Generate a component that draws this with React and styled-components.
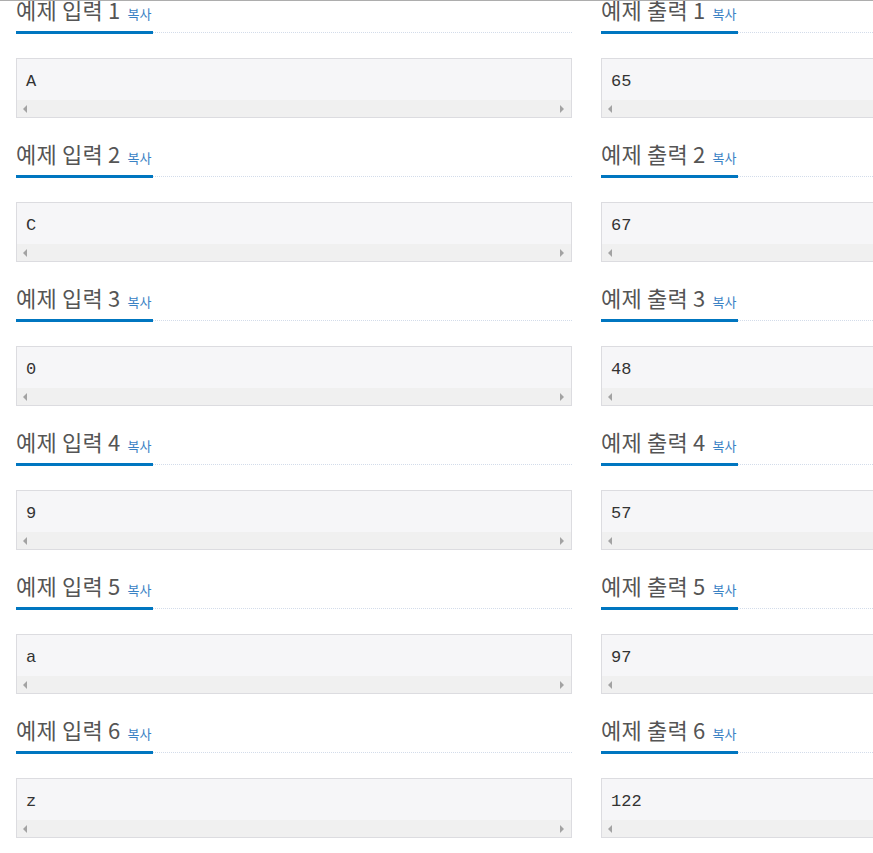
import React from 'react'
import styled, { createGlobalStyle } from 'styled-components';

const samples = [
  { input: 'A', output: '65' },
  { input: 'C', output: '67' },
  { input: '0', output: '48' },
  { input: '9', output: '57' },
  { input: 'a', output: '97' },
  { input: 'z', output: '122' },
]

const GlobalStyle = createGlobalStyle`
  html, body {
    margin: 0;
    padding: 0;
    background: #fff;
    overflow: hidden;
  }
  body {
    font-family: "Noto Sans CJK KR", "Noto Sans", sans-serif;
  }
`;

const Sample = ({ title, number, data }) => (
  <Section>
    <Headline>
      <TitleMark>
        <TitleText>{title} {number}</TitleText>
        <CopyLink href="#" onClick={(e) => e.preventDefault()}>복사</CopyLink>
      </TitleMark>
    </Headline>
    <Pre>
      <Code>{data}</Code>
      <ScrollBar>
        <Arrow />
        <Arrow $right />
      </ScrollBar>
    </Pre>
  </Section>
)

const App = () => {
  return (
    <>
      <GlobalStyle />
      <TopEdge />
      <Page>
        {samples.map((s, i) => (
          <Row key={i}>
            <Sample title="예제 입력" number={i + 1} data={s.input} />
            <Sample title="예제 출력" number={i + 1} data={s.output} />
          </Row>
        ))}
      </Page>
    </>
  )
}

export default App

const TopEdge = styled.div`
  position: fixed;
  top: 0;
  left: 0;
  right: 0;
  height: 1px;
  background: #adadad;
  z-index: 2;
`;

const Page = styled.div`
  margin-top: -2px;
  padding-left: 16px;
  width: max-content;
`;

const Row = styled.div`
  display: grid;
  grid-template-columns: 556px 556px;
  column-gap: 29px;
  margin-bottom: 24px;
`;

const Section = styled.div`
  display: flex;
  flex-direction: column;
`;

const Headline = styled.h2`
  margin: 0;
  display: flex;
  align-items: flex-end;
  border-bottom: 1px dotted #d3dcea;
  font-weight: 400;
`;

const TitleMark = styled.span`
  display: inline-flex;
  align-items: baseline;
  height: 22px;
  padding-bottom: 11px;
  padding-right: 2px;
  border-bottom: 3px solid #0076c0;
  margin-bottom: -2px;
`;

const TitleText = styled.span`
  font-size: 22px;
  line-height: 22px;
  letter-spacing: 0.2px;
  color: #555;
  white-space: pre;
`;

const CopyLink = styled.a`
  margin-left: 7px;
  font-size: 13px;
  line-height: 12px;
  color: #3a82c4;
  text-decoration: none;
`;

const Pre = styled.div`
  margin-top: 25px;
  border: 1px solid #dcdce0;
  background: #f6f6f8;
  display: flex;
  flex-direction: column;
`;

const Code = styled.div`
  font-family: "Liberation Mono", "DejaVu Sans Mono", monospace;
  font-size: 17px;
  line-height: 21px;
  color: #333;
  padding: 12px 9px 8px;
  height: 21px;
`;

const ScrollBar = styled.div`
  height: 17px;
  background: #f0f0f0;
  display: flex;
  align-items: center;
  justify-content: space-between;
  padding: 0 7px 0 6px;
`;

const Arrow = styled.span`
  width: 0;
  height: 0;
  border-top: 4px solid transparent;
  border-bottom: 4px solid transparent;
  ${(props) => props.$right
    ? 'border-left: 4px solid #a3a3a3;'
    : 'border-right: 4px solid #a3a3a3;'}
`;
